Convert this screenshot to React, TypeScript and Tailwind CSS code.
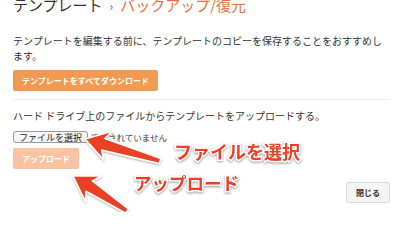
const jp = "font-['Noto_Sans_CJK_JP',_'Noto_Sans',_sans-serif]";

const Arrows = () => (
  <svg
    className="pointer-events-none absolute inset-0"
    width={400}
    height={212}
    viewBox="0 0 400 212"
  >
    <defs>
      <filter id="sh" x="-20%" y="-20%" width="140%" height="140%">
        <feDropShadow dx="0" dy="1" stdDeviation="1" floodColor="#000" floodOpacity="0.35" />
      </filter>
    </defs>
    <g fill="#ec3f26" stroke="#fff" strokeWidth={1.5} strokeLinejoin="round" filter="url(#sh)">
      <polygon points="85,139 112.2,131.3 104.9,138.5 160.7,158.6 159.3,163.4 101.5,150.1 103.8,160.1" />
      <polygon points="73,176 101.4,176 92.4,181 128.3,208.9 125.7,213.1 86,191.2 85.5,201.5" />
    </g>
  </svg>
);

const Label = ({ text, className }: { text: string; className: string }) => (
  <span
    className={`absolute whitespace-nowrap font-bold text-[#ec3f26] [paint-order:stroke_fill] [-webkit-text-stroke:3px_#fff] [filter:drop-shadow(0_1px_1px_rgba(0,0,0,0.4))] ${className}`}
  >
    {text}
  </span>
);

export default function App() {
  return (
    <div className={`relative h-[212px] w-[400px] overflow-hidden bg-white text-[#333] ${jp}`}>
      <div className="pl-[13px] pr-[10px]">
        <h1 className="-mt-[3px] flex items-baseline text-[15px] leading-[15px] font-normal">
          <span className="text-[#333]">テンプレート</span>
          <span className="mx-[7px] text-[12px] text-[#666]">›</span>
          <span className="text-[#e8703e]">バックアップ/復元</span>
        </h1>

        <p className="mt-[20px] text-[10px] leading-[15px]">
          テンプレートを編集する前に、テンプレートのコピーを保存することをおすすめします。
        </p>

        <button className="mt-[7px] flex h-[21px] items-center rounded-[2px] bg-[#f29a52] px-[9px] text-[8px] font-bold text-white">
          テンプレートをすべてダウンロード
        </button>

        <div className="mt-[8px] border-t border-[#ebebeb]" />

        <p className="mt-[8px] text-[10px] leading-[15px]">
          ハード ドライブ上のファイルからテンプレートをアップロードする。
        </p>

        <div className="mt-[8px] flex items-center gap-[3px]">
          <span className="flex h-[12px] items-center rounded-[3px] border border-[#9a9a9a] bg-[#f6f6f6] px-[5px] text-[9px] leading-none text-[#222]">
            ファイルを選択
          </span>
          <span className="text-[8.5px] leading-none text-[#333]">選択されていません</span>
        </div>

        <button className="mt-[5px] flex h-[21px] items-center rounded-[2px] bg-[#f8c3a2] px-[9px] text-[8px] font-bold text-white">
          アップロード
        </button>

        <div className="mt-[13px] flex justify-end">
          <button className="flex h-[21px] items-center rounded-[2px] border border-[#dcdcdc] bg-[#f5f5f5] px-[9px] text-[8px] font-bold text-[#333]">
            閉じる
          </button>
        </div>
      </div>

      <Arrows />
      <Label text="ファイルを選択" className="left-[174px] top-[140px] text-[18px] leading-[22px]" />
      <Label text="アップロード" className="left-[134px] top-[172px] text-[17.5px] leading-[22px]" />
    </div>
  );
}
